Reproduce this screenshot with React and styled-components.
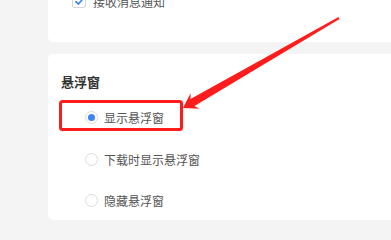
import React from "react";
import styled, { createGlobalStyle } from "styled-components";

const GlobalStyle = createGlobalStyle`
  html, body {
    margin: 0;
    padding: 0;
    background: #f4f4f4;
    font-family: "Noto Sans CJK SC", "Noto Sans", sans-serif;
    overflow: hidden;
  }
`;

const Page = styled.div`
  position: relative;
  display: flex;
  flex-direction: column;
  gap: 12px;
  width: 391px;
  height: 227px;
  overflow: hidden;
  padding-left: 48px;
  box-sizing: border-box;
`;

const Card = styled.section`
  background: #ffffff;
  border-radius: ${(p) => (p.$top ? "0 0 0 5px" : "5px 0 0 5px")};
  box-sizing: border-box;
  flex-shrink: 0;
`;

const NoticeCard = styled(Card)`
  display: flex;
  align-items: flex-start;
  height: 42px;
  padding-left: 24px;
`;

const FloatCard = styled(Card)`
  height: 166px;
  padding: 18px 0 0 13px;
`;

const CheckRow = styled.label`
  display: flex;
  align-items: center;
  gap: 7px;
  height: 20px;
  margin-top: -9px;
  font-size: 12px;
  color: #555;
`;

const CheckBox = styled.span`
  width: 14px;
  height: 14px;
  box-sizing: border-box;
  border: 1px solid #d6d6d6;
  border-radius: 2px;
  background: #fff;
  display: flex;
  align-items: center;
  justify-content: center;
  svg {
    width: 11px;
    height: 11px;
  }
`;

const Title = styled.h3`
  margin: 0;
  font-size: 13px;
  line-height: 20px;
  font-weight: 700;
  color: #333;
`;

const Options = styled.div`
  display: flex;
  flex-direction: column;
  margin-top: 5px;
  padding-left: 24px;
`;

const Option = styled.label`
  display: flex;
  align-items: center;
  gap: 6px;
  height: 41.5px;
  font-size: 12px;
  color: #555;
`;

const Radio = styled.span`
  width: 13px;
  height: 13px;
  box-sizing: border-box;
  border-radius: 50%;
  border: 1px solid #dcdcdc;
  background: #fff;
  display: flex;
  align-items: center;
  justify-content: center;
  &::after {
    content: "";
    width: 7px;
    height: 7px;
    border-radius: 50%;
    background: ${(p) => (p.$checked ? "#3f83f8" : "transparent")};
  }
`;

const Markup = styled.svg`
  position: absolute;
  left: 0;
  top: 0;
  pointer-events: none;
`;

const options = ["显示悬浮窗", "下载时显示悬浮窗", "隐藏悬浮窗"];

export default function App() {
  return (
    <>
      <GlobalStyle />
      <Page>
        <NoticeCard $top>
          <CheckRow>
            <CheckBox>
              <svg viewBox="0 0 12 12">
                <path
                  d="M2.2 6.2 L4.8 8.8 L9.8 3"
                  fill="none"
                  stroke="#3f83f8"
                  strokeWidth="1.8"
                  strokeLinecap="round"
                  strokeLinejoin="round"
                />
              </svg>
            </CheckBox>
            接收消息通知
          </CheckRow>
        </NoticeCard>
        <FloatCard>
          <Title>悬浮窗</Title>
          <Options>
            {options.map((label, i) => (
              <Option key={label}>
                <Radio $checked={i === 0} />
                {label}
              </Option>
            ))}
          </Options>
        </FloatCard>
        {/* annotation: red frame + arrow drawn over the screenshot */}
        <Markup width="391" height="227" viewBox="0 0 391 227">
          <rect
            x="60.5"
            y="101.5"
            width="121"
            height="28"
            rx="2"
            fill="none"
            stroke="#ff1c1c"
            strokeWidth="3"
          />
          <polygon
            fill="#ff1c1c"
            points="183,108 190.6,93.2 190.5,99 338.5,17.1 339.5,18.9 194.5,106 199.6,108.8"
          />
        </Markup>
      </Page>
    </>
  );
}
